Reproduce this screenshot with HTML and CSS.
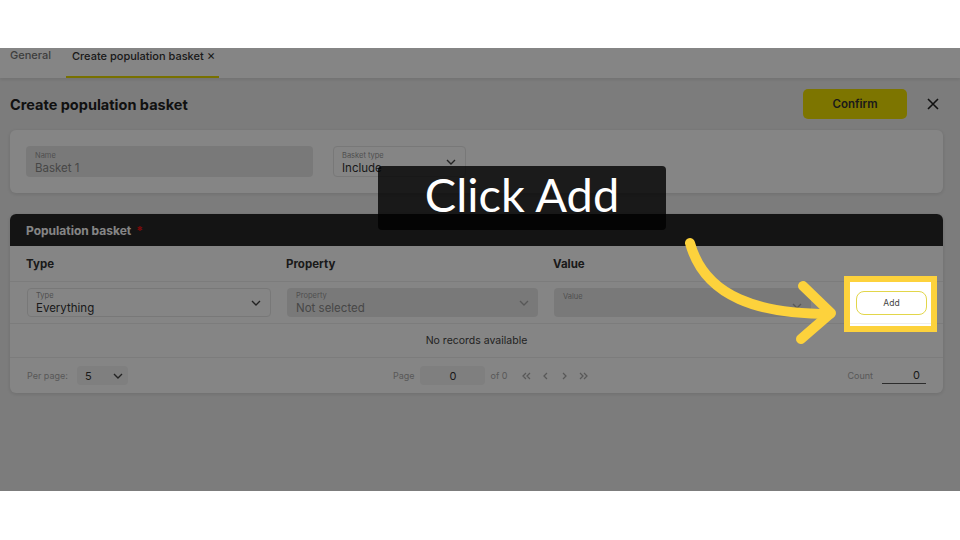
FILE: index.html
```html
<!DOCTYPE html>
<html lang="en">
<head>
  <meta charset="UTF-8">
  <meta name="viewport" content="width=device-width, initial-scale=1.0">
  <title>Create population basket</title>
  <link rel="stylesheet" href="styles.css">
</head>
<body>
  <div class="frame">
    <nav class="tabs">
      <span class="tab">General</span>
      <span class="tab tab-active">Create population basket <span class="tab-x">×</span></span>
    </nav>

    <header class="page-head">
      <h1>Create population basket</h1>
      <div class="head-actions">
        <button class="btn-confirm">Confirm</button>
        <button class="btn-close">
          <svg width="12" height="12" viewBox="0 0 12 12"><path d="M1 1l10 10M11 1L1 11" stroke="currentColor" stroke-width="1.6" fill="none"/></svg>
        </button>
      </div>
    </header>

    <section class="card card-form">
      <div class="field field-fill field-name">
        <div class="field-text">
          <span class="field-label">Name</span>
          <span class="field-value muted">Basket 1</span>
        </div>
      </div>
      <div class="field field-line field-kind">
        <div class="field-text">
          <span class="field-label">Basket type</span>
          <span class="field-value">Include</span>
        </div>
        <svg class="chev" width="10" height="6" viewBox="0 0 10 6"><path d="M1 1l4 4 4-4"/></svg>
      </div>
    </section>

    <section class="card card-table">
      <div class="table-title">Population basket <span class="req">*</span></div>

      <div class="table-row table-head">
        <div>Type</div>
        <div>Property</div>
        <div>Value</div>
        <div></div>
      </div>

      <div class="table-row table-inputs">
        <div class="field field-line">
          <div class="field-text">
            <span class="field-label">Type</span>
            <span class="field-value">Everything</span>
          </div>
          <svg class="chev" width="10" height="6" viewBox="0 0 10 6"><path d="M1 1l4 4 4-4"/></svg>
        </div>
        <div class="field field-fill">
          <div class="field-text">
            <span class="field-label">Property</span>
            <span class="field-value muted">Not selected</span>
          </div>
          <svg class="chev chev-light" width="10" height="6" viewBox="0 0 10 6"><path d="M1 1l4 4 4-4"/></svg>
        </div>
        <div class="field field-fill field-value-box">
          <div class="field-text">
            <span class="field-label">Value</span>
          </div>
          <svg class="chev chev-light" width="10" height="6" viewBox="0 0 10 6"><path d="M1 1l4 4 4-4"/></svg>
        </div>
        <button class="btn-add">Add</button>
      </div>

      <div class="table-empty">No records available</div>

      <div class="table-foot">
        <div class="foot-group">
          <span class="foot-label">Per page:</span>
          <div class="per-page">
            <span>5</span>
            <svg class="chev" width="10" height="6" viewBox="0 0 10 6"><path d="M1 1l4 4 4-4"/></svg>
          </div>
        </div>
        <div class="foot-group pager">
          <span class="foot-label">Page</span>
          <div class="page-input">0</div>
          <span class="foot-label">of 0</span>
          <div class="pager-arrows">
            <svg width="9" height="8" viewBox="0 0 9 8"><path d="M4 1L1 4l3 3M8 1L5 4l3 3"/></svg>
            <svg width="6" height="8" viewBox="0 0 6 8"><path d="M4 1L1 4l3 3"/></svg>
            <svg width="6" height="8" viewBox="0 0 6 8"><path d="M2 1l3 3-3 3"/></svg>
            <svg width="9" height="8" viewBox="0 0 9 8"><path d="M1 1l3 3-3 3M5 1l3 3-3 3"/></svg>
          </div>
        </div>
        <div class="foot-group">
          <span class="foot-label">Count</span>
          <div class="count-input">0</div>
        </div>
      </div>
    </section>

    <div class="spotlight"></div>

    <svg class="guide-arrow" width="960" height="443" viewBox="0 0 960 443">
      <path d="M690 195 C 705 250, 760 266, 830 266"/>
      <path d="M803 238 L831 265 L801 291"/>
    </svg>

    <div class="tip">Click Add</div>
  </div>
</body>
</html>
```

FILE: styles.css
```css
* {
  box-sizing: border-box;
  margin: 0;
  padding: 0;
}

body {
  background: #fff;
  font-family: 'Inter', 'Liberation Sans', sans-serif;
  color: #333;
}

button {
  font-family: inherit;
  border: none;
  background: none;
  cursor: pointer;
}

.frame {
  position: relative;
  margin-top: 48px;
  height: 443px;
  overflow: hidden;
  background: #eeeeee;
}

/* tabs */
.tabs {
  display: flex;
  height: 30px;
  padding-left: 10px;
  background: #fff;
  box-shadow: 0 2px 3px rgba(0, 0, 0, 0.08);
}

.tab {
  font-size: 11px;
  font-weight: 500;
  line-height: 14px;
  color: #777;
  padding: 0 15px 0 0;
}

.tab-active {
  color: #333;
  padding: 0 4px 0 6px;
  border-bottom: 2px solid #e6d800;
}

.tab-x {
  font-weight: 400;
  font-size: 13px;
}

/* page header */
.page-head {
  display: flex;
  align-items: center;
  justify-content: space-between;
  height: 52px;
  padding: 0 21px 0 10px;
}

.page-head h1 {
  font-size: 14.5px;
  font-weight: 700;
  color: #222;
}

.head-actions {
  display: flex;
  align-items: center;
  gap: 20px;
}

.btn-confirm {
  width: 104px;
  height: 30px;
  border-radius: 5px;
  background: #f0e100;
  color: #333;
  font-size: 11.5px;
  font-weight: 600;
}

.btn-close {
  display: flex;
  color: #222;
}

/* cards */
.card {
  margin: 0 17px 0 10px;
  background: #fff;
  border-radius: 6px;
  box-shadow: 0 1px 4px rgba(0, 0, 0, 0.12);
}

.card-form {
  display: flex;
  gap: 20px;
  padding: 16px;
}

.card-form .field-text {
  padding-top: 3px;
}

.card-table {
  margin-top: 21px;
  overflow: hidden;
}

/* fields */
.field {
  display: flex;
  align-items: center;
  justify-content: space-between;
  height: 31px;
  padding: 0 9px;
  border-radius: 4px;
}

.field-text {
  display: flex;
  flex-direction: column;
  gap: 1px;
  padding-top: 1px;
}

.field-fill {
  background: #e9e9e9;
}

.field-line {
  border: 1px solid #e6e6e6;
  padding-left: 8px;
}

.field-label {
  font-size: 7.5px;
  line-height: 9px;
  color: #999;
}

.field-value {
  font-size: 11.5px;
  line-height: 15px;
  color: #333;
}

.muted {
  color: #888;
}

.field-name {
  width: 287px;
}

.field-kind {
  width: 133px;
}

.chev {
  flex: none;
  fill: none;
  stroke: #444;
  stroke-width: 1.4;
}

.chev-light {
  stroke: #aaa;
}

.field-value-box {
  align-items: flex-start;
  padding-top: 3px;
}

.field-value-box .chev {
  align-self: center;
  margin-top: 4px;
}

/* table */
.table-title {
  height: 32px;
  display: flex;
  align-items: center;
  padding-left: 16px;
  background: #282828;
  color: #fff;
  font-size: 12px;
  font-weight: 700;
  gap: 5px;
}

.req {
  color: #ee1111;
}

.table-row {
  display: grid;
  grid-template-columns: 244px 251px 257px 1fr;
  column-gap: 16px;
  align-items: center;
  padding: 0 16px;
  border-bottom: 1px solid #eeeeee;
}

.table-head {
  height: 36px;
  font-size: 11.5px;
  font-weight: 700;
  color: #333;
}

.table-inputs {
  height: 42px;
  padding-left: 17px;
}

.table-inputs .field {
  height: 29px;
}

.btn-add {
  justify-self: end;
  width: 71px;
  height: 24px;
  border: 1px solid #e2d64a;
  border-radius: 8px;
  background: #fff;
  font-size: 8.5px;
  color: #444;
}

.table-empty {
  height: 34px;
  display: flex;
  align-items: center;
  justify-content: center;
  font-size: 10.5px;
  color: #444;
  border-bottom: 1px solid #eeeeee;
}

.table-foot {
  height: 35px;
  display: flex;
  align-items: center;
  justify-content: space-between;
  padding: 0 17px;
}

.foot-group {
  display: flex;
  align-items: center;
  gap: 9px;
}

.foot-label {
  font-size: 9px;
  color: #aaa;
}

.per-page {
  width: 51px;
  height: 19px;
  display: flex;
  align-items: center;
  justify-content: space-between;
  padding: 0 5px 0 8px;
  background: #f3f3f3;
  border-radius: 4px;
  font-size: 11px;
  color: #333;
}

.pager {
  gap: 0;
  margin-left: 6px;
}

.page-input {
  width: 65px;
  height: 19px;
  margin: 0 5px 0 6px;
  display: flex;
  align-items: center;
  justify-content: center;
  background: #f3f3f3;
  border-radius: 4px;
  font-size: 11px;
  color: #333;
}

.pager-arrows {
  display: flex;
  align-items: center;
  gap: 12px;
  margin-left: 15px;
}

.pager-arrows svg {
  fill: none;
  stroke: #aaa;
  stroke-width: 1.3;
}

.count-input {
  width: 44px;
  padding: 0 6px 1px 0;
  border-bottom: 1px solid #555;
  text-align: right;
  font-size: 11px;
  color: #333;
}

/* tour overlay */
.spotlight {
  position: absolute;
  left: 844px;
  top: 228px;
  width: 93px;
  height: 56px;
  border: 6px solid #fdd23c;
  box-shadow: 0 0 0 2000px rgba(0, 0, 0, 0.48);
  z-index: 1;
}

.guide-arrow {
  position: absolute;
  left: 0;
  top: 0;
  z-index: 2;
  fill: none;
  stroke: #fdd23c;
  stroke-width: 10;
  stroke-linecap: round;
  stroke-linejoin: round;
}

.tip {
  position: absolute;
  left: 378px;
  top: 118px;
  width: 288px;
  height: 64px;
  display: flex;
  align-items: center;
  justify-content: center;
  padding-bottom: 8px;
  background: rgba(0, 0, 0, 0.8);
  border-radius: 4px;
  color: #fff;
  font-family: 'Lato', sans-serif;
  font-size: 47px;
  z-index: 3;
}
```
